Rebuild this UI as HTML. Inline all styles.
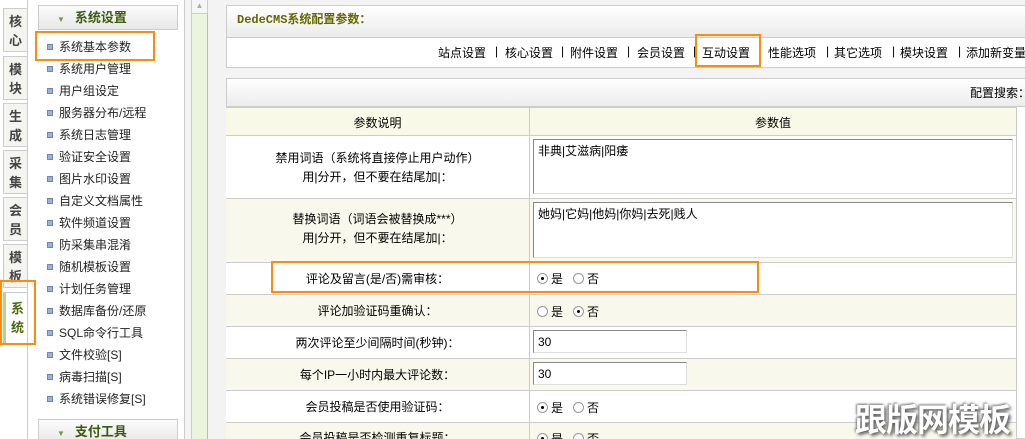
<!DOCTYPE html>
<html><head><meta charset="utf-8"><style>
*{margin:0;padding:0;box-sizing:border-box}
html,body{width:1025px;height:439px;overflow:hidden}
body{position:relative;background:#f3f3f3;font-family:"Liberation Sans","Noto Sans CJK SC",sans-serif;font-size:12px;color:#000}
.a{position:absolute;white-space:nowrap}
.tab{position:absolute;left:3px;width:24px;height:44px;background:#f4f4f0;border:1px solid #ccc;border-right:none;font-weight:bold;color:#444;font-size:13px;line-height:19px;padding:3px 0 0 5px;}
.mi{position:absolute;left:47px;font-size:12px;color:#222;white-space:nowrap}
.mi i{display:inline-block;width:6px;height:6px;background:#9bb3d9;border:1px solid #6a86b8;margin-right:6px;vertical-align:1px}
.ob{position:absolute;border:2px solid #ff8a10}
.row{position:absolute;left:226px;width:791px;border-top:1px solid #ccc}
.lc{position:absolute;left:0;width:303px;text-align:center;white-space:nowrap}
.tx{position:absolute;left:533px;width:480px;background:#fff;border:1px solid #888;border-right-color:#ddd;border-bottom-color:#ddd;padding:2px 4px;font-size:12px}
.inp{position:absolute;left:533px;width:154px;height:23px;background:#fff;border:1px solid #888;border-right-color:#ddd;border-bottom-color:#ddd;padding:4px 4px;font-size:12px}
.rd{position:absolute;font-size:12px;white-space:nowrap}
.rd b{display:inline-block;width:11px;height:11px;border:1px solid #999;border-radius:50%;vertical-align:-1px;margin-right:3px;position:relative;background:#fff}
.rd b.on:after{content:"";position:absolute;left:3px;top:3px;width:3px;height:3px;background:#000;border-radius:50%}
.nv{position:absolute;top:44px;font-size:12px;white-space:nowrap}
</style></head><body>
<div class="a" style="left:0;top:0;width:27px;height:439px;background:#fff"></div>
<div class="tab" style="top:8px">核<br>心</div>
<div class="tab" style="top:56px">模<br>块</div>
<div class="tab" style="top:103px">生<br>成</div>
<div class="tab" style="top:150px">采<br>集</div>
<div class="tab" style="top:197px">会<br>员</div>
<div class="tab" style="top:244px">模<br>板</div>
<div class="tab" style="top:292px;background:#fff;border-left:3px solid #b7d48a;color:#4a6a10;height:52px;padding-top:6px">系<br>统</div>
<div class="a" style="left:27px;top:0;width:158px;height:439px;background:#fff;border-left:1px solid #ccc;border-right:1px solid #ccc"></div>
<div class="a" style="left:38px;top:5px;width:140px;height:25px;background:linear-gradient(#fbfbfb,#e8e8e8);border:1px solid #ccc;font-weight:bold;color:#3e5a10;font-size:13px;line-height:23px;padding-left:18px"><span style="color:#7a9a3a;font-size:8px;margin-right:10px">▼</span>系统设置</div>
<div class="mi" style="top:38px"><i></i>系统基本参数</div>
<div class="mi" style="top:60px"><i></i>系统用户管理</div>
<div class="mi" style="top:82px"><i></i>用户组设定</div>
<div class="mi" style="top:104px"><i></i>服务器分布/远程</div>
<div class="mi" style="top:126px"><i></i>系统日志管理</div>
<div class="mi" style="top:148px"><i></i>验证安全设置</div>
<div class="mi" style="top:170px"><i></i>图片水印设置</div>
<div class="mi" style="top:192px"><i></i>自定义文档属性</div>
<div class="mi" style="top:214px"><i></i>软件频道设置</div>
<div class="mi" style="top:236px"><i></i>防采集串混淆</div>
<div class="mi" style="top:258px"><i></i>随机模板设置</div>
<div class="mi" style="top:280px"><i></i>计划任务管理</div>
<div class="mi" style="top:302px"><i></i>数据库备份/还原</div>
<div class="mi" style="top:324px"><i></i>SQL命令行工具</div>
<div class="mi" style="top:346px"><i></i>文件校验[S]</div>
<div class="mi" style="top:368px"><i></i>病毒扫描[S]</div>
<div class="mi" style="top:390px"><i></i>系统错误修复[S]</div>
<div class="a" style="left:38px;top:419px;width:140px;height:25px;background:linear-gradient(#fbfbfb,#e8e8e8);border:1px solid #ccc;font-weight:bold;color:#3e5a10;font-size:13px;line-height:23px;padding-left:18px"><span style="color:#7a9a3a;font-size:8px;margin-right:10px">▼</span>支付工具</div>
<div class="a" style="left:185px;top:0;width:23px;height:439px;background:#f4f4f4"></div>
<div class="a" style="left:191px;top:0;width:17px;height:14px;border:1px solid #ccc;border-top:none;background:#f6f6f6;color:#aaa;font-size:8px;text-align:center;line-height:12px">▲</div>
<div class="a" style="left:191px;top:14px;width:17px;height:425px;background:#eaf4df;border-left:1px solid #ccc;border-right:1px solid #bbb"></div>
<div class="a" style="left:226px;top:5px;width:799px;height:63px;background:#fff;border:1px solid #ccc;border-right:none"></div>
<div class="a" style="left:227px;top:6px;width:798px;height:32px;background:linear-gradient(#fff,#ebebeb);border-bottom:1px solid #ccc;font-weight:bold;color:#666600;font-family:'Liberation Mono','Noto Sans CJK SC',monospace;font-size:12px;line-height:28px;padding-left:10px">DedeCMS系统配置参数：</div>
<div class="nv" style="left:438px">站点设置</div><div class="nv" style="left:495px">|</div>
<div class="nv" style="left:505px">核心设置</div><div class="nv" style="left:561px">|</div>
<div class="nv" style="left:570px">附件设置</div><div class="nv" style="left:627px">|</div>
<div class="nv" style="left:637px">会员设置</div><div class="nv" style="left:693px">|</div>
<div class="nv" style="left:702px">互动设置</div>
<div class="nv" style="left:768px">性能选项</div><div class="nv" style="left:826px">|</div>
<div class="nv" style="left:834px">其它选项</div><div class="nv" style="left:892px">|</div>
<div class="nv" style="left:900px">模块设置</div><div class="nv" style="left:958px">|</div>
<div class="nv" style="left:966px">添加新变量</div>
<div class="a" style="left:226px;top:78px;width:799px;height:361px;background:#fff;border:1px solid #ccc;border-right:none"></div>
<div class="a" style="left:227px;top:79px;width:798px;height:28px;background:linear-gradient(#fff,#ececec);border-bottom:1px solid #ccc"></div>
<div class="a" style="left:970px;top:84px;font-size:12px">配置搜索：</div>
<div class="row" style="top:107px;height:28px;background:#f8f9e6"><div class="lc" style="top:6px">参数说明</div><div class="a" style="left:303px;top:6px;width:488px;text-align:center">参数值</div></div>
<div class="row" style="top:135px;height:63px;background:#fff"><div class="lc" style="top:13px;line-height:19px">禁用词语（系统将直接停止用户动作）<br>用|分开，但不要在结尾加|：</div></div>
<div class="row" style="top:198px;height:64px;background:#f8f8ec"><div class="lc" style="top:11px;line-height:19px">替换词语（词语会被替换成***）<br>用|分开，但不要在结尾加|：</div></div>
<div class="row" style="top:262px;height:32px;background:#fff"><div class="lc" style="top:7px">评论及留言(是/否)需审核：</div></div>
<div class="row" style="top:294px;height:32px;background:#f8f8ec"><div class="lc" style="top:7px">评论加验证码重确认：</div></div>
<div class="row" style="top:326px;height:32px;background:#fff"><div class="lc" style="top:7px">两次评论至少间隔时间(秒钟)：</div></div>
<div class="row" style="top:358px;height:32px;background:#f8f8ec"><div class="lc" style="top:7px">每个IP一小时内最大评论数：</div></div>
<div class="row" style="top:390px;height:32px;background:#fff"><div class="lc" style="top:7px">会员投稿是否使用验证码：</div></div>
<div class="row" style="top:422px;height:17px;background:#f8f8ec"><div class="lc" style="top:6px">会员投稿是否检测重复标题：</div></div>
<div class="a" style="left:529px;top:107px;width:1px;height:332px;background:#ccc"></div>
<div class="a" style="left:1016px;top:107px;width:1px;height:332px;background:#ccc"></div>
<div class="tx" style="top:139px;height:55px">非典|艾滋病|阳痿</div>
<div class="tx" style="top:202px;height:56px">她妈|它妈|他妈|你妈|去死|贱人</div>
<div class="rd" style="left:537px;top:270px"><b class="on"></b>是&nbsp;&nbsp; <b></b>否</div>
<div class="rd" style="left:537px;top:303px"><b></b>是&nbsp;&nbsp; <b class="on"></b>否</div>
<div class="inp" style="top:330px">30</div>
<div class="inp" style="top:362px">30</div>
<div class="rd" style="left:537px;top:399px"><b class="on"></b>是&nbsp;&nbsp; <b></b>否</div>
<div class="rd" style="left:537px;top:430px"><b class="on"></b>是&nbsp;&nbsp; <b></b>否</div>
<div class="ob" style="left:35px;top:31px;width:120px;height:30px"></div>
<div class="ob" style="left:0;top:280px;width:36px;height:65px"></div>
<div class="ob" style="left:695px;top:34px;width:66px;height:33px"></div>
<div class="ob" style="left:271px;top:261px;width:488px;height:32px"></div>
<div class="a" style="left:855px;top:398px;font-size:32px;font-weight:bold;color:#fff;letter-spacing:-1px;text-shadow:2px 2px 3px #555,-1px -1px 2px #777;font-family:'Noto Sans CJK SC',sans-serif;line-height:40px">跟版网模板</div>
</body></html>
